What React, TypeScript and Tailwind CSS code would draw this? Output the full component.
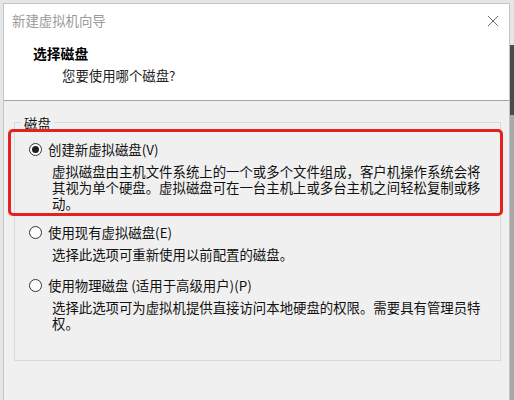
const font = "font-['Microsoft_YaHei','Noto_Sans_CJK_SC',sans-serif]";

function Radio({ checked }: { checked?: boolean }) {
  return (
    <span className="w-[13px] h-[13px] rounded-full border border-[#333333] bg-white flex items-center justify-center shrink-0">
      {checked && <span className="w-[7px] h-[7px] rounded-full bg-[#1f1f1f]" />}
    </span>
  );
}

function Option({
  label,
  lines,
  checked,
  className,
}: {
  label: string;
  lines: string[];
  checked?: boolean;
  className?: string;
}) {
  return (
    <div className={className}>
      <div className="flex items-center h-5 gap-[6px]">
        <Radio checked={checked} />
        <span>{label}</span>
      </div>
      <p className="ml-[23px] mt-[4px] leading-4">
        {lines.map((l, i) => (
          <span key={l}>
            {i > 0 && <br />}
            {l}
          </span>
        ))}
      </p>
    </div>
  );
}

export default function App() {
  return (
    <div className={`${font} w-[514px] h-[400px] overflow-hidden bg-[#e6e6e6] flex pt-[3px] pl-[3px] text-[13.4px] text-[#111]`}>
      <div className="w-[507px] h-[397px] border-l border-t border-r border-[#c4c4c4] bg-[#f0f0f0] flex flex-col relative">
        <div className="h-[97px] bg-white border-b border-[#a3a3a3] shrink-0 relative">
          <div className="absolute left-[8px] top-[6px] leading-5 text-[13.4px] text-[#9a9a9a]">新建虚拟机向导</div>
          <svg className="absolute left-[483px] top-[11px]" width="12" height="12" viewBox="0 0 12 12">
            <path d="M1 1L11 11M11 1L1 11" stroke="#707070" strokeWidth="1" />
          </svg>
          <div className="absolute left-[29px] top-[39px] leading-5 font-bold text-[13.8px] text-black">选择磁盘</div>
          <div className="absolute left-[58px] top-[61px] leading-5 text-[#222]">您要使用哪个磁盘?</div>
        </div>

        <div className="mt-[21px] ml-[10px] w-[487px] h-[239px] border border-[#d9d9d9] relative">
          <div className="absolute left-[6px] -top-[10px] leading-5 px-[3px] bg-[#f0f0f0]">磁盘</div>
          <div className="pt-[16px] pl-[14px]">
            <Option
              checked
              label="创建新虚拟磁盘(V)"
              lines={[
                "虚拟磁盘由主机文件系统上的一个或多个文件组成，客户机操作系统会将",
                "其视为单个硬盘。虚拟磁盘可在一台主机上或多台主机之间轻松复制或移",
                "动。",
              ]}
            />
            <Option
              className="mt-[11px]"
              label="使用现有虚拟磁盘(E)"
              lines={["选择此选项可重新使用以前配置的磁盘。"]}
            />
            <Option
              className="mt-[13px]"
              label="使用物理磁盘 (适用于高级用户)(P)"
              lines={[
                "选择此选项可为虚拟机提供直接访问本地硬盘的权限。需要具有管理员特",
                "权。",
              ]}
            />
          </div>
        </div>

        <div className="absolute left-[4px] top-[125px] w-[495px] h-[87px] border-[3px] border-[#e5211d] rounded-[5px] pointer-events-none" />
      </div>
      <div className="w-[4px] flex flex-col">
        <div className="h-[42px] bg-[#e6e6e6]" />
        <div className="h-[70px] bg-[#4a4a4a]" />
        <div className="flex-1 bg-[#a8a8a8]" />
      </div>
    </div>
  );
}
